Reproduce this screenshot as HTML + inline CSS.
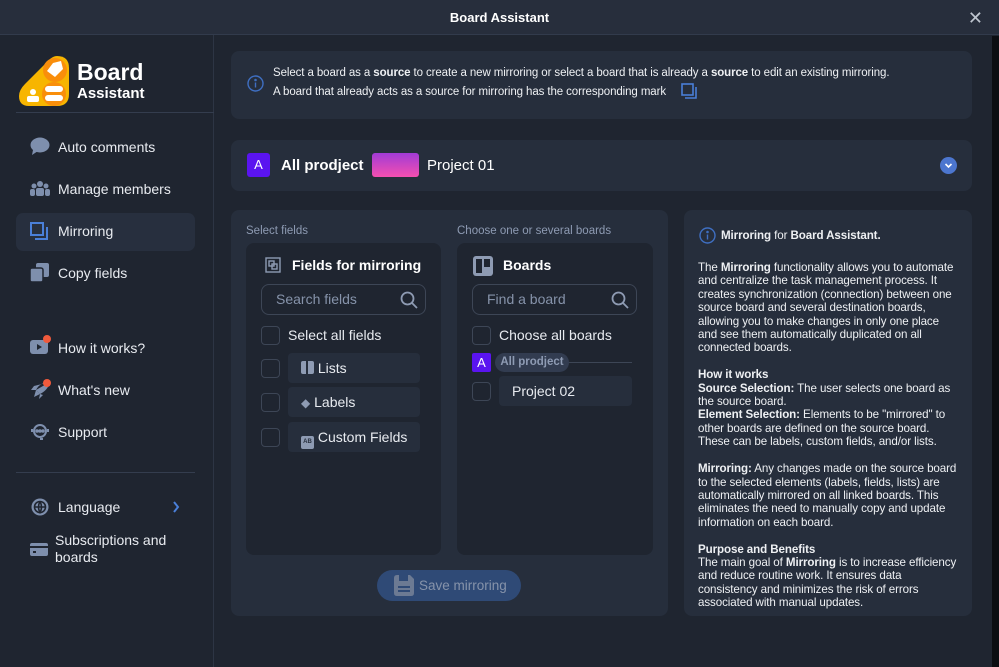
<!DOCTYPE html>
<html><head><meta charset="utf-8"><style>
*{box-sizing:border-box;margin:0;padding:0}
body{width:999px;height:667px;overflow:hidden;background:#1f2530;font-family:"Liberation Sans",sans-serif;color:#e8ebf0;position:relative}
.abs{position:absolute}
.title{left:0;top:0;width:999px;height:35px;background:#272e3c;border-bottom:1px solid #323b4c;text-align:center;font-weight:bold;font-size:13px;line-height:36px;color:#fff}
.side{left:0;top:35px;width:214px;height:632px;border-right:1px solid #2d3544}
.mi{position:absolute;left:58px;font-size:14px;color:#e8ebf0}
.ic{position:absolute;left:30px}
.panel{background:#262e3c;border-radius:8px}
.box{background:#1f2530;border-radius:8px}
.cb{position:absolute;width:19px;height:19px;border:1px solid #3d4656;border-radius:4px}
.chip{position:absolute;background:#262e3c;border-radius:4px;font-size:14px;color:#e8ebf0;line-height:30px}
.rt{font-size:11.6px;line-height:13.4px;color:#eef0f3;letter-spacing:-0.1px}
.rt b{font-weight:bold}
</style></head><body>
<div class="abs title">Board Assistant<span style="position:absolute;right:16px;top:0;font-weight:normal;font-size:18px;color:#bfc5cf">✕</span></div>
<div class="abs" style="left:992px;top:36px;width:7px;height:631px;background:#0c0e12"></div>
<div class="abs side">
 <svg class="abs" style="left:17px;top:19px" width="54" height="54" viewBox="0 0 54 54"><path d="M40 2 Q52 2 52 14 V40 Q52 52 40 52 H12 Q2 52 2 42 Q2 36 8 30 L32 6 Q36 2 40 2Z" fill="#f7b500"/><circle cx="38" cy="16" r="12" fill="#f98e0b"/><circle cx="37" cy="40" r="12" fill="#f98e0b"/><rect x="28" y="32" width="18" height="6" rx="3" fill="#fff"/><rect x="28" y="41" width="18" height="6" rx="3" fill="#fff"/><circle cx="16" cy="38" r="3" fill="#fff"/><rect x="10" y="42" width="12" height="6" rx="2" fill="#fff"/><path d="M36 9 l8 -2 l2 8 l-8 8 l-8 -6z" fill="#fff"/></svg>
 <div class="abs" style="left:77px;top:24px;font-size:23px;font-weight:bold;color:#fff;line-height:26px">Board</div>
 <div class="abs" style="left:77px;top:50px;font-size:15px;font-weight:bold;color:#fff">Assistant</div>
 <div class="abs" style="left:16px;top:77px;width:198px;height:1px;background:#343d4e"></div>
 <svg class="ic" style="top:102px" width="20" height="18"><ellipse cx="10" cy="8" rx="9.5" ry="7.5" fill="#7e8fad"/><path d="M3 13 L2 18 L8 14Z" fill="#7e8fad"/></svg>
 <div class="mi" style="top:104px">Auto comments</div>
 <svg class="ic" style="top:145px" width="20" height="16" fill="#7e8fad"><circle cx="10" cy="4" r="3"/><circle cx="4" cy="6" r="2.5"/><circle cx="16" cy="6" r="2.5"/><rect x="6" y="8" width="8" height="8" rx="2"/><rect x="0" y="9" width="5" height="7" rx="2"/><rect x="15" y="9" width="5" height="7" rx="2"/></svg>
 <div class="mi" style="top:146px">Manage members</div>
 <div class="abs" style="left:16px;top:178px;width:179px;height:38px;background:#272f3e;border-radius:7px"></div>
 <svg class="ic" style="top:187px" width="18" height="18" fill="none" stroke="#4a7fd8" stroke-width="2"><rect x="1" y="1" width="12" height="12"/><path d="M5 17 H17 V5"/></svg>
 <div class="mi" style="top:188px">Mirroring</div>
 <svg class="ic" style="top:228px" width="19" height="19" fill="#7e8fad"><rect x="6" y="0" width="13" height="14" rx="2"/><rect x="0" y="5" width="13" height="14" rx="2" stroke="#1f2530" stroke-width="1.5"/></svg>
 <div class="mi" style="top:230px">Copy fields</div>
 <svg class="ic" style="top:299px" width="24" height="22"><rect x="0" y="6" width="18" height="14" rx="3" fill="#7e8fad"/><path d="M7 10 L12 13 L7 16Z" fill="#1f2530"/><circle cx="17" cy="5" r="4" fill="#f05a3c"/></svg>
 <div class="mi" style="top:305px">How it works?</div>
 <svg class="ic" style="top:343px" width="24" height="22"><path d="M20 4 Q10 4 6 12 L1 12 L4 8 Z M6 12 L10 16 Q18 12 20 4 M10 16 L9 21 L13 17Z" fill="#7e8fad"/><path d="M6 12 L10 16 L4 19Z" fill="#7e8fad"/><circle cx="17" cy="5" r="4" fill="#f05a3c"/></svg>
 <div class="mi" style="top:347px">What's new</div>
 <svg class="ic" style="top:388px" width="20" height="18" fill="none" stroke="#7e8fad" stroke-width="2"><circle cx="10" cy="8" r="6"/><path d="M2 9 V6 M18 9 V6 M10 16 H13"/><circle cx="7" cy="8" r="0.8" fill="#7e8fad"/><circle cx="10" cy="8" r="0.8" fill="#7e8fad"/><circle cx="13" cy="8" r="0.8" fill="#7e8fad"/></svg>
 <div class="mi" style="top:389px">Support</div>
 <div class="abs" style="left:16px;top:437px;width:179px;height:1px;background:#343d4e"></div>
 <svg class="ic" style="top:462px" width="20" height="20" fill="none" stroke="#7e8fad" stroke-width="1.6"><circle cx="10" cy="10" r="8.5" fill="#7e8fad" stroke="none"/><circle cx="10" cy="10" r="5.5" stroke="#1f2530"/><path d="M4.5 10 H15.5 M10 4.5 Q7 10 10 15.5 Q13 10 10 4.5" stroke="#1f2530"/></svg>
 <div class="mi" style="top:464px">Language</div>
 <svg class="abs" style="left:172px;top:466px" width="8" height="12" fill="none" stroke="#4a7fd8" stroke-width="2"><path d="M2 1 L6 6 L2 11"/></svg>
 <svg class="ic" style="top:508px" width="18" height="13"><rect x="0" y="0" width="18" height="13" rx="2" fill="#7e8fad"/><rect x="0" y="3" width="18" height="2" fill="#1f2530"/><rect x="3" y="8" width="3" height="2" fill="#1f2530"/></svg>
 <div class="mi" style="top:497px;left:55px;line-height:17px">Subscriptions and<br>boards</div>
</div>

<div class="abs panel" style="left:231px;top:51px;width:741px;height:68px"></div>
<svg class="abs" style="left:247px;top:75px" width="17" height="17" fill="none" stroke="#3f6fc2" stroke-width="1.4"><circle cx="8.5" cy="8.5" r="7.5"/><path d="M8.5 7.5 V12.5"/><circle cx="8.5" cy="5" r="0.6" fill="#3f6fc2"/></svg>
<div class="abs" style="left:273px;top:64px;font-size:11.5px;line-height:19px;color:#eef0f3;letter-spacing:-0.1px">Select a board as a <b>source</b> to create a new mirroring or select a board that is already a <b>source</b> to edit an existing mirroring.<br>A board that already acts as a source for mirroring has the corresponding mark</div>
<svg class="abs" style="left:681px;top:83px" width="16" height="16" fill="none" stroke="#4a7fd8" stroke-width="1.6"><rect x="1" y="1" width="11" height="11"/><path d="M4 15 H15 V4"/></svg>

<div class="abs panel" style="left:231px;top:140px;width:741px;height:51px"></div>
<div class="abs" style="left:247px;top:153px;width:23px;height:24px;background:#5a14f0;border-radius:3px;color:#fff;font-size:13px;text-align:center;line-height:24px">A</div>
<div class="abs" style="left:281px;top:157px;font-size:15px;font-weight:bold;color:#fff">All prodject</div>
<div class="abs" style="left:372px;top:153px;width:47px;height:24px;border-radius:3px;background:linear-gradient(#a13bd6,#f54fb0)"></div>
<div class="abs" style="left:427px;top:157px;font-size:15px;color:#fff">Project 01</div>
<svg class="abs" style="left:940px;top:157px" width="17" height="17"><circle cx="8.5" cy="8.5" r="8.5" fill="#4c76cf"/><path d="M5.5 7 L8.5 10 L11.5 7" fill="none" stroke="#fff" stroke-width="1.6"/></svg>

<div class="abs panel" style="left:231px;top:210px;width:437px;height:406px"></div>
<div class="abs" style="left:246px;top:225px;font-size:11.5px;color:#8e9bb3">Select fields</div>
<div class="abs" style="left:457px;top:225px;font-size:11.5px;color:#8e9bb3">Choose one or several boards</div>
<div class="abs box" style="left:246px;top:243px;width:195px;height:312px"></div>
<div class="abs box" style="left:457px;top:243px;width:196px;height:312px"></div>
<svg class="abs" style="left:265px;top:257px" width="16" height="16" fill="none" stroke="#8e9bb3" stroke-width="1.4"><rect x="1" y="1" width="14" height="14"/><rect x="4" y="4" width="5" height="5"/><rect x="7" y="7" width="5" height="5"/></svg>
<div class="abs" style="left:292px;top:257px;font-size:14px;font-weight:bold;color:#fff">Fields for mirroring</div>
<svg class="abs" style="left:473px;top:256px" width="20" height="20"><rect x="0" y="0" width="20" height="20" rx="3" fill="#8e9bb3"/><rect x="3" y="3" width="6" height="14" fill="#1f2530"/><rect x="11" y="3" width="6" height="8" fill="#1f2530"/></svg>
<div class="abs" style="left:503px;top:257px;font-size:14px;font-weight:bold;color:#fff">Boards</div>
<div class="abs" style="left:261px;top:284px;width:165px;height:31px;border:1px solid #3d4656;border-radius:8px;font-size:14px;color:#8693aa;padding-left:14px;line-height:29px">Search fields</div>
<div class="abs" style="left:472px;top:284px;width:165px;height:31px;border:1px solid #3d4656;border-radius:8px;font-size:14px;color:#8693aa;padding-left:14px;line-height:29px">Find a board</div>
<svg class="abs" style="left:400px;top:291px" width="18" height="18" fill="none" stroke="#8e9bb3" stroke-width="1.8"><circle cx="7.5" cy="7.5" r="6"/><path d="M12 12 L17 17"/></svg>
<svg class="abs" style="left:611px;top:291px" width="18" height="18" fill="none" stroke="#8e9bb3" stroke-width="1.8"><circle cx="7.5" cy="7.5" r="6"/><path d="M12 12 L17 17"/></svg>
<div class="cb" style="left:261px;top:326px"></div><div class="abs" style="left:288px;top:327px;font-size:14px">Select all fields</div>
<div class="cb" style="left:472px;top:326px"></div><div class="abs" style="left:499px;top:327px;font-size:14px">Choose all boards</div>
<div class="cb" style="left:261px;top:359px"></div><div class="chip" style="left:288px;top:353px;width:132px;height:30px;padding-left:13px"><span style="display:inline-block;width:13px;height:13px;background:#8e9bb3;border-radius:2px;vertical-align:-1px;border-left:5px solid #8e9bb3;box-shadow:inset 2px 0 0 #262e3c"></span> Lists</div>
<div class="cb" style="left:261px;top:393px"></div><div class="chip" style="left:288px;top:387px;width:132px;height:30px;padding-left:13px"><span style="color:#8e9bb3;font-size:12px">◆</span> Labels</div>
<div class="cb" style="left:261px;top:428px"></div><div class="chip" style="left:288px;top:422px;width:132px;height:30px;padding-left:13px"><span style="display:inline-block;width:13px;height:13px;background:#8e9bb3;border-radius:2px;font-size:6px;line-height:13px;color:#262e3c;text-align:center;vertical-align:-1px;font-weight:bold">AB</span> Custom Fields</div>
<div class="abs" style="left:472px;top:353px;width:19px;height:19px;background:#5a14f0;border-radius:2px;color:#fff;font-size:13px;text-align:center;line-height:19px">A</div>
<div class="abs" style="left:560px;top:362px;width:72px;height:1px;background:#3d4656"></div>
<div class="abs" style="left:495px;top:353px;width:74px;height:19px;border-radius:10px;background:#323c50;color:#8e9bb3;font-size:11.5px;font-weight:bold;text-align:center;line-height:19px">All prodject</div>
<div class="cb" style="left:472px;top:382px"></div><div class="chip" style="left:499px;top:376px;width:133px;height:30px;padding-left:13px">Project 02</div>
<div class="abs" style="left:377px;top:570px;width:144px;height:31px;border-radius:16px;background:#2f4a76;color:#8693aa;font-size:13.5px;line-height:31px;padding-left:42px">Save mirroring</div>
<svg class="abs" style="left:394px;top:575px" width="20" height="21"><path d="M0 3 Q0 0 3 0 H16 L20 4 V18 Q20 21 17 21 H3 Q0 21 0 18Z" fill="#6c7a93"/><rect x="5" y="0" width="9" height="6" fill="#2f4a76"/><rect x="4" y="11" width="12" height="2" fill="#2f4a76"/><rect x="4" y="15" width="12" height="2" fill="#2f4a76"/></svg>

<div class="abs panel" style="left:684px;top:210px;width:288px;height:406px"></div>
<svg class="abs" style="left:699px;top:227px" width="17" height="17" fill="none" stroke="#3f6fc2" stroke-width="1.4"><circle cx="8.5" cy="8.5" r="7.5"/><path d="M8.5 7.5 V12.5"/><circle cx="8.5" cy="5" r="0.6" fill="#3f6fc2"/></svg>
<div class="abs rt" style="left:721px;top:229px"><b>Mirroring</b> for <b>Board Assistant.</b></div>
<div class="abs rt" style="left:698px;top:261px;width:262px">The <b>Mirroring</b> functionality allows you to automate and centralize the task management process. It creates synchronization (connection) between one source board and several destination boards, allowing you to make changes in only one place and see them automatically duplicated on all connected boards.<br><br><b>How it works</b><br><b>Source Selection:</b> The user selects one board as the source board.<br><b>Element Selection:</b> Elements to be "mirrored" to other boards are defined on the source board. These can be labels, custom fields, and/or lists.<br><br><b>Mirroring:</b> Any changes made on the source board to the selected elements (labels, fields, lists) are automatically mirrored on all linked boards. This eliminates the need to manually copy and update information on each board.<br><br><b>Purpose and Benefits</b><br>The main goal of <b>Mirroring</b> is to increase efficiency and reduce routine work. It ensures data consistency and minimizes the risk of errors associated with manual updates.</div>
</body></html>
